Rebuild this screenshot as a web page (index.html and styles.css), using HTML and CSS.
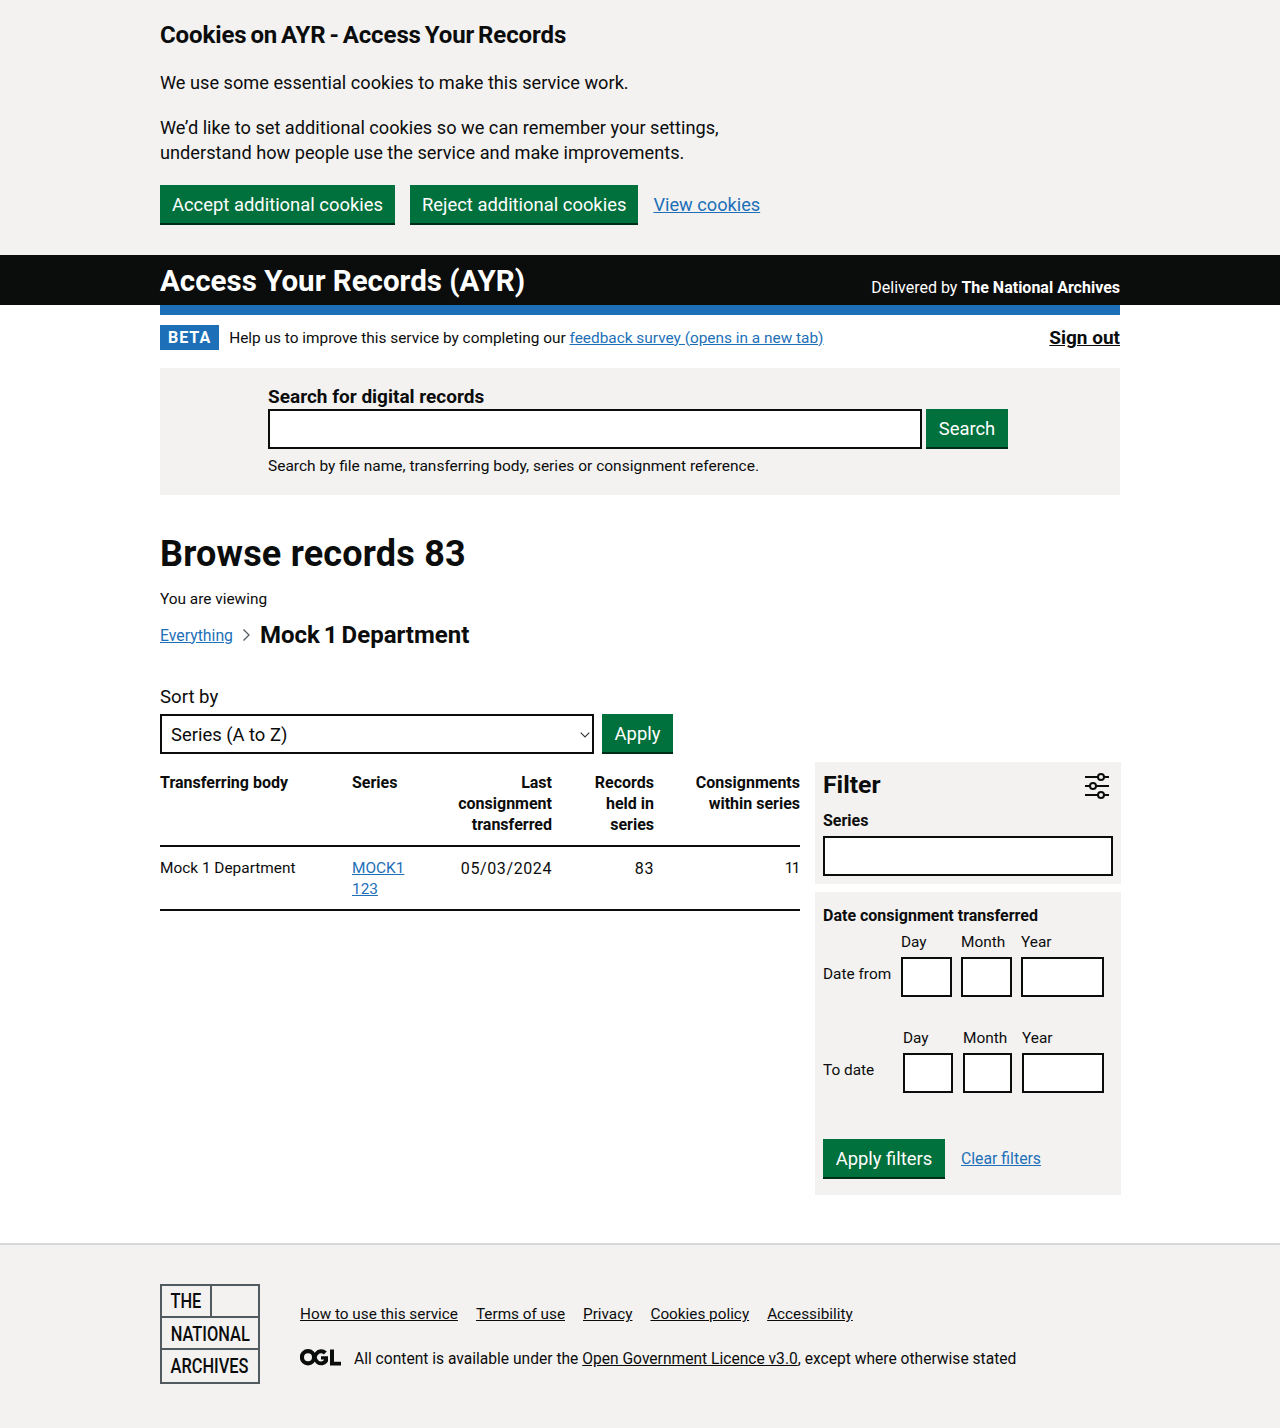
FILE: index.html
```html
<!DOCTYPE html>
<html lang="en">
<head>
<meta charset="utf-8">
<title>Browse records 83 - Access Your Records</title>
<link rel="stylesheet" href="styles.css">
</head>
<body>

<div class="cookies">
  <div class="wrap">
    <h2 class="cookies-title">Cookies on AYR - Access Your Records</h2>
    <p class="cookies-text">We use some essential cookies to make this service work.</p>
    <p class="cookies-text">We’d like to set additional cookies so we can remember your settings, understand how people use the service and make improvements.</p>
    <div class="cookies-actions">
      <a class="btn" href="#">Accept additional cookies</a>
      <a class="btn" href="#">Reject additional cookies</a>
      <a class="link" href="#">View cookies</a>
    </div>
  </div>
</div>

<header class="header">
  <div class="wrap header-row">
    <a class="service" href="#">Access Your Records (AYR)</a>
    <span class="delivered">Delivered by <b>The National Archives</b></span>
  </div>
</header>

<div class="wrap">
  <div class="blue-bar"></div>

  <div class="beta-row">
    <strong class="tag">BETA</strong>
    <span class="beta-text">Help us to improve this service by completing our <a class="link" href="#">feedback survey (opens in a new tab)</a></span>
    <a class="signout" href="#">Sign out</a>
  </div>

  <form class="search">
    <label class="search-label" for="q">Search for digital records</label>
    <div class="search-row">
      <input class="input search-input" id="q" type="text">
      <button class="btn btn-search" type="button">Search</button>
    </div>
    <p class="search-hint">Search by file name, transferring body, series or consignment reference.</p>
  </form>

  <h1 class="title">Browse records 83</h1>
  <p class="viewing">You are viewing</p>
  <div class="crumbs">
    <a class="link" href="#">Everything</a>
    <svg class="chevron" width="9" height="14" viewBox="0 0 9 14"><path d="M1.5 1.5 7 7l-5.500 5.500" fill="none" stroke="#505a5f" stroke-width="1.300"/></svg>
    <span class="crumb-current">Mock 1 Department</span>
  </div>

  <label class="sort-label" for="sort">Sort by</label>
  <div class="sort-row">
    <div class="select-box">
      <select class="select" id="sort"><option>Series (A to Z)</option></select>
      <svg class="select-arrow" width="10" height="6" viewBox="0 0 10 6"><path d="M.7.7 5 5 9.300.7" fill="none" stroke="#333" stroke-width="1.100"/></svg>
    </div>
    <button class="btn btn-apply" type="button">Apply</button>
  </div>

  <div class="content">
    <table class="records">
      <thead>
        <tr>
          <th class="col-body">Transferring body</th>
          <th class="col-series">Series</th>
          <th class="num col-last">Last consignment transferred</th>
          <th class="num col-held">Records held in series</th>
          <th class="num col-cons">Consignments within series</th>
        </tr>
      </thead>
      <tbody>
        <tr>
          <td>Mock 1 Department</td>
          <td><a class="link" href="#">MOCK1 123</a></td>
          <td class="num figure">05/03/2024</td>
          <td class="num figure">83</td>
          <td class="num ones">11</td>
        </tr>
      </tbody>
    </table>

    <aside class="filters">
      <div class="panel panel-top">
        <div class="filter-head">
          <h2 class="filter-title">Filter</h2>
          <svg class="filter-icon" width="24" height="26" viewBox="0 0 24 26" fill="none" stroke="#0b0c0c" stroke-width="2"><path d="M0 4h24M0 13h24M0 22h24"/><circle cx="16" cy="4" r="3" fill="#f3f2f1"/><circle cx="8" cy="13" r="3" fill="#f3f2f1"/><circle cx="16" cy="22" r="3" fill="#f3f2f1"/></svg>
        </div>
        <label class="bold-label" for="fseries">Series</label>
        <input class="input filter-input" id="fseries" type="text">
      </div>

      <div class="panel panel-dates">
        <div class="bold-label">Date consignment transferred</div>
        <div class="date-row">
          <span class="date-name">Date from</span>
          <div class="date-part"><label>Day</label><input class="input date-sm" type="text"></div>
          <div class="date-part"><label>Month</label><input class="input date-sm" type="text"></div>
          <div class="date-part"><label>Year</label><input class="input date-lg" type="text"></div>
        </div>
        <div class="date-row date-row-to">
          <span class="date-name">To date</span>
          <div class="date-part"><label>Day</label><input class="input date-to-day" type="text"></div>
          <div class="date-part"><label>Month</label><input class="input date-to-month" type="text"></div>
          <div class="date-part"><label>Year</label><input class="input date-to-year" type="text"></div>
        </div>
        <div class="filter-actions">
          <button class="btn btn-filters" type="button">Apply filters</button>
          <a class="link clear" href="#">Clear filters</a>
        </div>
      </div>
    </aside>
  </div>
</div>

<footer class="footer">
  <div class="wrap footer-row">
    <div class="tna">
      <div class="tna-row tna-top"><span class="tna-the"><span class="tna-word">THE</span></span><span class="tna-empty"></span></div>
      <div class="tna-row"><span class="tna-word">NATIONAL</span></div>
      <div class="tna-row"><span class="tna-word">ARCHIVES</span></div>
    </div>
    <div class="footer-main">
      <ul class="footer-links">
        <li><a href="#">How to use this service</a></li>
        <li><a href="#">Terms of use</a></li>
        <li><a href="#">Privacy</a></li>
        <li><a href="#">Cookies policy</a></li>
        <li><a href="#">Accessibility</a></li>
      </ul>
      <div class="licence">
        <svg class="ogl" width="41" height="17" viewBox="0 0 41 17" fill="#0b0c0c">
          <path fill-rule="evenodd" d="M8 0a8 8 0 1 0 0 16.400A8 8 0 0 0 8 0zm0 4.200a4 4 0 1 1 0 8 4 4 0 0 1 0-8z"/>
          <path d="M23.500 11.500a4 4 0 1 1 .3-6l3-2.900A8 8 0 1 0 28 12.500V7.200h-7v3.300h3.200z"/>
          <path d="M30 .4h4v12.300h7v3.700H30z"/>
        </svg>
        <span>All content is available under the <a href="#">Open Government Licence v3.0</a>, except where otherwise stated</span>
      </div>
    </div>
  </div>
</footer>

</body>
</html>
```

FILE: styles.css
```css
* {box-sizing: border-box;}
body {margin: 0; font-family: Roboto, Arial, sans-serif; color: #0b0c0c; background: #fff; font-size: 15.4px;}
a {color: inherit;}
.wrap {width: 960px; margin: 0 auto;}
.link {color: #1d70b8;}

.btn {display: inline-block; height: 38px; margin-bottom: 2px; padding: 0 12px; font: inherit; font-size: 18.400px; line-height: 40px; color: #fff; background: #00703c; border: 0; box-shadow: 0 2px 0 #002d18; text-decoration: none;}
.btn-search {width: 82px;}
.btn-apply {width: 71px;}
.btn-filters {width: 122px; padding: 0;}
.input {display: block; height: 40px; border: 2px solid #0b0c0c; background: #fff; border-radius: 0; padding: 5px;}

/* cookies */
.cookies {background: #f3f2f1; height: 255px; padding-top: 20px;}
.cookies-title {margin: 0 0 20px; font-size: 24px; line-height: 30px; font-weight: 700; word-spacing: -2px; letter-spacing: -.1px;}
.cookies-text {margin: 0 0 20px; width: 620px; font-size: 18.200px; line-height: 25px;}
.cookies-actions {display: flex; align-items: center; gap: 15px; margin-top: 20px; font-size: 18.200px; line-height: 22px;}

/* header */
.header {background: #0b0c0c; height: 50px; color: #fff;}
.header-row {display: flex; justify-content: space-between; align-items: flex-end; height: 50px;}
.service {font-size: 29.500px; line-height: 48px; font-weight: 700; color: #fff; text-decoration: none;}
.delivered {font-size: 16px; line-height: 20px; margin-bottom: 7px;}
.blue-bar {height: 10px; background: #1d70b8;}

.beta-row {display: flex; align-items: center; height: 25px; margin-top: 10px;}
.tag {background: #1d70b8; color: #fff; font-size: 16px; line-height: 25px; padding: 0 8px; letter-spacing: 1px; margin-right: 10px;}
.beta-text {flex: 1;}
.signout {font-weight: 700; font-size: 19px;}

/* search */
.search {background: #f3f2f1; margin-top: 18px; height: 127px; padding: 17px 108px 0;}
.search-label {display: block; font-size: 19px; font-weight: 700; line-height: 24px;}
.search-row {display: flex; gap: 4px;}
.search-input {width: 654px;}
.search-hint {margin: 7px 0 0; font-size: 15.500px; line-height: 20px;}

.title {margin: 38px 0 0; font-size: 36px; line-height: 42px; font-weight: 700; letter-spacing: .2px;}
.viewing {margin: 14px 0 0; line-height: 20px;}
.crumbs {display: flex; align-items: center; height: 30px; margin-top: 11px; font-size: 15.800px;}
.chevron {margin: 0 9px 0 9px;}
.crumb-current {font-size: 24px; font-weight: 700; word-spacing: -2px;}

.sort-label {display: block; margin-top: 35px; font-size: 18.600px; line-height: 25px;}
.sort-row {display: flex; gap: 8px; margin-top: 4px;}
.select-box {position: relative; width: 434px; height: 40px;}
.select {display: block; width: 100%; height: 40px; border: 2px solid #0b0c0c; background: #fff; font: inherit; font-size: 18.400px; padding: 0 9px; border-radius: 0; color: #0b0c0c; appearance: none;}
.select-arrow {position: absolute; right: 4px; top: 18px;}

/* table and filters */
.content {display: grid; grid-template-columns: 640px 306px; column-gap: 15px; margin-top: 8px; width: 961px;}
.records {width: 640px; border-collapse: collapse; table-layout: fixed; align-self: start;}
.records th {text-align: left; vertical-align: top; font-size: 16px; font-weight: 700; line-height: 21px; padding: 10px 0 10px; border-bottom: 2px solid #0b0c0c;}
.records td {vertical-align: top; line-height: 21px; padding: 11px 0 9px; border-bottom: 2px solid #0b0c0c;}
.records .num {text-align: right;}
.records .figure {font-size: 16px; letter-spacing: .6px;}
.records .ones {letter-spacing: -1.500px; padding-right: 1px;}
.records .col-last {padding-left: 40px;}
.records .col-held {padding-left: 40px;}
.col-body {width: 192px;}
.col-series {width: 60px;}
.col-last {width: 140px;}
.col-held {width: 102px;}
.col-cons {width: 146px;}

.panel {background: #f3f2f1; padding: 8px;}
.panel-top {height: 122px;}
.panel-dates {height: 303px; margin-top: 8px; padding-top: 14px;}
.filter-head {display: flex; justify-content: space-between; align-items: center; height: 30px; padding-right: 4px;}
.filter-icon {margin-top: 2px;}
.filter-title {margin: 0 0 2px; font-size: 24.800px; font-weight: 700;}
.bold-label {display: block; font-size: 16px; font-weight: 700; line-height: 20px;}
.panel-top .bold-label {margin-top: 11px;}
.filter-input {width: 290px; margin-top: 5px;}

.date-row {display: flex; align-items: center; margin-top: 6px;}
.date-row-to {margin-top: 31px;}
.date-name {flex: none; width: 78px; padding-top: 18px;}
.date-part {margin-right: 9px;}
.date-part label {display: block; line-height: 20px; margin-bottom: 5px;}
.date-sm {width: 51px;}
.date-lg {width: 83px;}
.date-row-to .date-name {width: 80px;}
.date-row-to .date-part {margin-right: 10px;}
.date-to-day {width: 50px;}
.date-to-month {width: 49px;}
.date-to-year {width: 82px;}
.filter-actions {display: flex; align-items: center; margin-top: 46px; gap: 16px; line-height: 18px;}
.clear {font-size: 15.800px; margin-bottom: 1px;}

/* footer */
.footer {margin-top: 48px; height: 185px; background: #f3f2f1; border-top: 2px solid #d8d8d8; padding-top: 39px;}
.footer-row {display: flex; gap: 40px;}
.tna {width: 100px; height: 100px; border: 2px solid #505a5f; font-size: 20px; font-weight: 500;}
.tna-row {height: 32px; line-height: 31px; text-align: center; border-bottom: 2px solid #505a5f;}
.tna-row + .tna-row {line-height: 33px;}
.tna-row:last-child {border-bottom: 0;}
.tna-top {display: flex;}
.tna-the {width: 50px; border-right: 2px solid #505a5f;}
.tna-word {display: inline-block; transform: scaleX(.82);}
.footer-main {padding-top: 21px;}
.footer-links {list-style: none; display: flex; gap: 18px; margin: 0; padding: 0; font-size: 15.300px;}
.licence {display: flex; align-items: center; gap: 13px; margin-top: 26px; font-size: 15.600px;}
.ogl {margin-bottom: 3px;}
```
